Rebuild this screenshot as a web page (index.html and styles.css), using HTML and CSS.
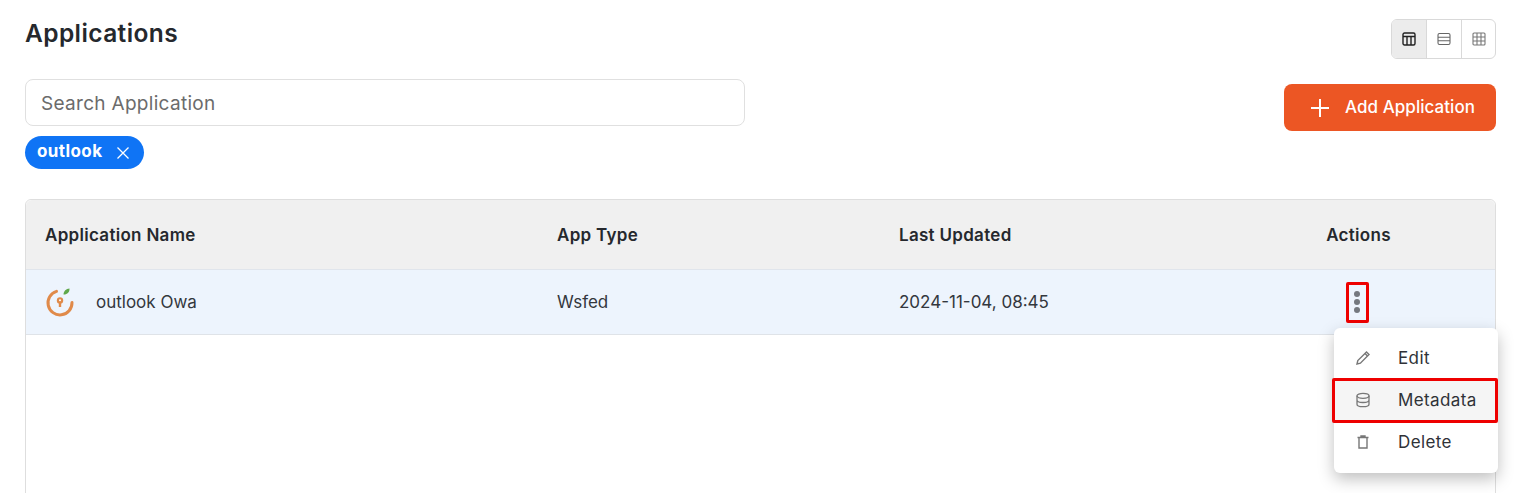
FILE: index.html
```html
<!DOCTYPE html>
<html lang="en">
<head>
  <meta charset="UTF-8" />
  <title>Applications</title>
  <link rel="stylesheet" href="styles.css">
</head>
<body>
  <div class="page">
    <div class="top-row">
      <div class="title">Applications</div>
      <div class="view-switch">
        <div class="view-btn active">
          <svg width="14" height="14" viewBox="0 0 14 14" fill="none" stroke="#222" stroke-width="1.4"><rect x="1" y="1" width="12" height="12" rx="1.5"/><path d="M1 4.500h12M5 4.500V13M9 4.500V13"/></svg>
        </div>
        <div class="view-btn">
          <svg width="14" height="14" viewBox="0 0 14 14" fill="none" stroke="#666" stroke-width="1.1"><rect x="1" y="1.500" width="12" height="11" rx="1.500"/><path d="M1 5.200h12M1 8.800h12"/></svg>
        </div>
        <div class="view-btn">
          <svg width="14" height="14" viewBox="0 0 14 14" fill="none" stroke="#777" stroke-width="1.1"><rect x="1" y="1" width="12" height="12" rx="1"/><path d="M1 5h12M1 9h12M5 1v12M9 1v12"/></svg>
        </div>
      </div>
    </div>

    <div class="filter-row">
      <div class="search-col">
        <div class="search">Search Application</div>
        <div class="chip">
          <span>outlook</span>
          <svg width="14" height="14" viewBox="0 0 14 14" fill="none" stroke="#fff" stroke-width="1.3"><path d="M1.500 1.500l11 11M12.500 1.500l-11 11"/></svg>
        </div>
      </div>
      <div class="add-btn">
        <svg width="20" height="20" viewBox="0 0 20 20" fill="none" stroke="#fff" stroke-width="2"><path d="M10 1v18M1 10h18"/></svg>
        <span>Add Application</span>
      </div>
    </div>

    <div class="table">
      <div class="table-head">
        <div>Application Name</div>
        <div>App Type</div>
        <div>Last Updated</div>
        <div class="col-actions head-actions">Actions</div>
      </div>
      <div class="table-row">
        <div class="app-name">
          <svg width="30" height="30" viewBox="0 0 30 30" fill="none">
            <path d="M11.500 4.400A12 12 0 1 0 27 15.500" stroke="#e08a4a" stroke-width="3" stroke-linecap="round"/>
            <path d="M18.500 7.500C18.600 4.200 21 1.800 24.500 1.500C24.700 5.200 22.200 7.700 18.500 7.500Z" fill="#5fa84a"/>
            <circle cx="15" cy="13.500" r="3.200" fill="#e08a4a"/>
            <rect x="13.800" y="14" width="2.400" height="6" fill="#e08a4a"/>
            <circle cx="15" cy="13.200" r="1" fill="#fff"/>
          </svg>
          <span>outlook Owa</span>
        </div>
        <div>Wsfed</div>
        <div>2024-11-04, 08:45</div>
        <div class="col-actions">
          <div class="kebab"><i></i><i></i><i></i></div>
        </div>
      </div>
    </div>
  </div>

  <div class="menu">
    <div class="menu-item">
      <svg width="16" height="16" viewBox="0 0 16 16" fill="none" stroke="#777" stroke-width="1.4"><path d="M2 14l.8-3.400L11.500 2l2.500 2.500-8.600 8.700L2 14z"/><path d="M10 3.500L12.500 6"/></svg>
      <span>Edit</span>
    </div>
    <div class="menu-item selected">
      <svg width="16" height="16" viewBox="0 0 16 16" fill="none" stroke="#777" stroke-width="1.3"><ellipse cx="8" cy="3.800" rx="6" ry="2.500"/><path d="M2 3.800v8.400c0 1.400 2.700 2.500 6 2.500s6-1.100 6-2.500V3.800M2 8c0 1.400 2.700 2.500 6 2.500s6-1.100 6-2.500"/></svg>
      <span>Metadata</span>
    </div>
    <div class="menu-item">
      <svg width="16" height="16" viewBox="0 0 16 16" fill="none" stroke="#777" stroke-width="1.4"><path d="M2.500 3.500h11M6 3.500V2h4v1.500M4 3.500V14h8V3.500"/></svg>
      <span>Delete</span>
    </div>
  </div>
</body>
</html>
```

FILE: styles.css
```css
* {
  box-sizing: border-box;
}
html, body {
  height: 100%;
}
body {
  margin: 0;
  background-color: #fff;
  font-family: Inter, "Liberation Sans", sans-serif;
  color: #2b2f36;
  overflow: hidden;
  position: relative;
}
.page {
  height: 493px;
  overflow: hidden;
  padding: 19px 18px 0 25px;
}
.top-row {
  display: flex;
  justify-content: space-between;
  align-items: flex-start;
  height: 60px;
}
.title {
  font-size: 24.5px;
  font-weight: 600;
  letter-spacing: 0.4px;
  line-height: 29px;
  color: #25282d;
}
.view-switch {
  display: grid;
  grid-template-columns: 34px 35px 34px;
  width: 105px;
  height: 40px;
  border: 1px solid #d9d9d9;
  border-radius: 6px;
  overflow: hidden;
}
.view-btn {
  display: flex;
  align-items: center;
  justify-content: center;
  border-left: 1px solid #d9d9d9;
}
.view-btn:first-child {
  border-left: 0;
}
.view-btn.active {
  background-color: #ececec;
}
.filter-row {
  display: flex;
  justify-content: space-between;
  align-items: flex-start;
  height: 120px;
}
.search-col {
  display: flex;
  flex-direction: column;
  align-items: flex-start;
  gap: 10px;
}
.search {
  width: 720px;
  height: 47px;
  padding: 2px 0 0 15px;
  border: 1px solid #e0e0e0;
  border-radius: 8px;
  display: flex;
  align-items: center;
  font-size: 19px;
  letter-spacing: 0.3px;
  color: #6b6b6b;
}
.chip {
  display: flex;
  align-items: center;
  gap: 14px;
  height: 33px;
  padding: 0 14px 0 12px;
  border-radius: 17px;
  background-color: #0f74f5;
  color: #fff;
  font-size: 17px;
  font-weight: 700;
  letter-spacing: 0.4px;
}
.chip span {
  position: relative;
  top: -2px;
}
.add-btn {
  display: flex;
  align-items: center;
  gap: 15px;
  width: 212px;
  height: 47px;
  margin-top: 5px;
  padding-left: 26px;
  border-radius: 8px;
  background-color: #ec5624;
  color: #fff;
  font-size: 17px;
  font-weight: 500;
  letter-spacing: 0.05px;
}
.add-btn span {
  position: relative;
  top: -1px;
}
.table {
  border: 1px solid #dedede;
  border-radius: 6px 6px 0 0;
  height: 400px;
}
.table-head, .table-row {
  display: grid;
  grid-template-columns: 512px 342px 1fr 276px;
  align-items: center;
  padding-left: 19px;
}
.table-head {
  height: 69px;
  padding-top: 1px;
  background-color: #f0f0f0;
  font-size: 17px;
  font-weight: 600;
  letter-spacing: 0.3px;
  color: #25282d;
  border-radius: 6px 6px 0 0;
}
.table-row {
  height: 66px;
  background-color: #edf4fd;
  border-top: 1px solid #e0e5ec;
  border-bottom: 1px solid #dfe3e8;
  font-size: 17px;
  color: #33373d;
}
.col-actions {
  display: flex;
  justify-content: center;
}
.head-actions {
  padding-left: 3px;
}
.app-name {
  display: flex;
  align-items: center;
  gap: 21px;
}
.kebab {
  width: 23px;
  height: 41px;
  border: 3px solid #ee0000;
  border-radius: 2px;
  display: flex;
  flex-direction: column;
  align-items: center;
  justify-content: center;
  gap: 2px;
}
.kebab i {
  width: 6px;
  height: 6px;
  border-radius: 50%;
  background-color: #74787f;
}
.menu {
  position: absolute;
  left: 1334px;
  top: 328px;
  width: 164px;
  height: 145px;
  padding-top: 9px;
  background-color: #fff;
  border-radius: 6px;
  box-shadow: 0 6px 16px rgba(0, 0, 0, 0.25);
}
.menu-item {
  display: flex;
  align-items: center;
  gap: 27px;
  height: 42px;
  padding-left: 21px;
  font-size: 17px;
  letter-spacing: 0.4px;
  color: #2f3237;
}
.menu-item.selected {
  height: 45px;
  margin: -1px 0 -2px -2px;
  padding: 0 0 1px 20px;
  background-color: #f5f5f5;
  border: 3px solid #ee0000;
  border-radius: 2px;
}
```
